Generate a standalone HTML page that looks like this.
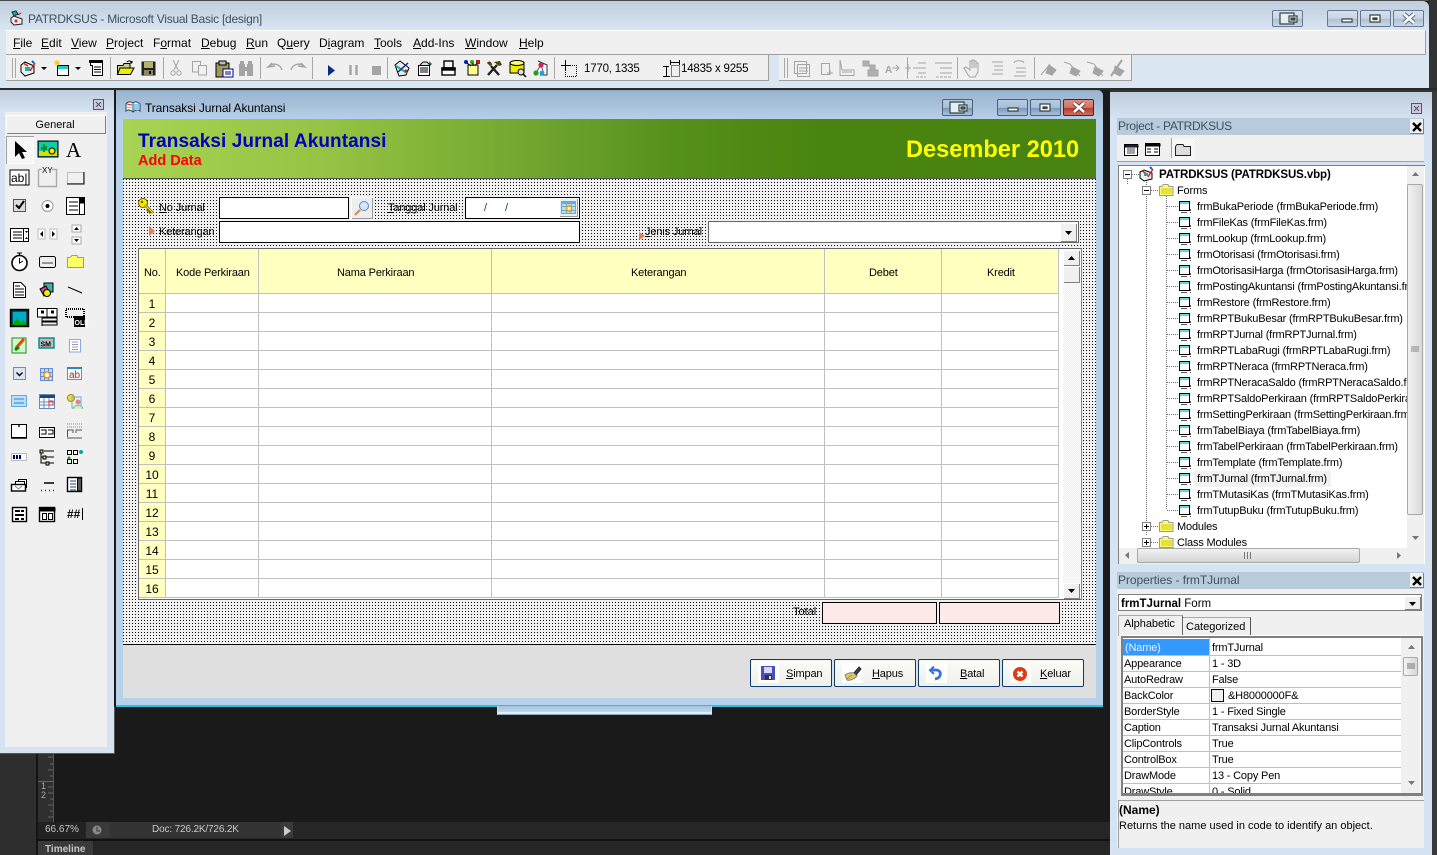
<!DOCTYPE html>
<html><head><meta charset="utf-8"><title>PATRDKSUS - Microsoft Visual Basic [design]</title>
<style>
html,body{margin:0;padding:0;width:1437px;height:855px;overflow:hidden;background:#1a1a1a}
body{position:relative;font-family:"Liberation Sans",sans-serif;font-size:12px;color:#000}
div{position:absolute;box-sizing:border-box}
.t{position:absolute;white-space:nowrap;line-height:14px}
.f{font-size:11px;letter-spacing:-.15px;margin-top:1px}
.wb{position:absolute;height:17px;width:31px;border:1px solid #66788f;border-radius:2px;background:linear-gradient(#d5e1ee 0,#c6d5e5 50%,#aebfd2 55%,#cbd9e8 100%)}
.fb{background:linear-gradient(#b6cbe2 0,#a9c0da 50%,#7f9aba 55%,#a6c0dc 100%);border-color:#4f6078}
.bl{background:#fff;border:1px solid #000}
.ln{background:#c0c0c0}
.yh{background:#ffffc0}
.b{position:absolute;top:659px;height:28px;width:82px;border:1px solid #0c3c74;border-radius:2px;background:linear-gradient(#fbfbf9,#efefea);box-shadow:inset 0 0 0 1px #f4f4f0}
.bi{position:absolute;left:7px;top:3px;width:21px;height:20px;background:#fff}
.tr{font-size:11px;letter-spacing:-.17px;margin-top:1px}
.dots{background-color:#f0f0f0;background-image:linear-gradient(90deg,transparent 1px,#f0f0f0 1px),linear-gradient(#000 1px,#f0f0f0 1px);background-size:3px 3px,3px 3px}
.dith{background-color:#fff;background-image:linear-gradient(45deg,#efefef 25%,transparent 25%,transparent 75%,#efefef 75%),linear-gradient(45deg,#efefef 25%,transparent 25%,transparent 75%,#efefef 75%);background-size:2px 2px;background-position:0 0,1px 1px}
.sb{background:#f0f0f0;box-shadow:inset 1px 1px 0 #fff,inset -1px -1px 0 #808080}
.n{left:139px;width:26px;text-align:center}
</style></head><body>

<!-- dark background -->
<div style="left:0;top:754px;width:36px;height:101px;background:#2e2e2e"></div>
<div style="left:36px;top:754px;width:2px;height:101px;background:#141414"></div>
<div style="left:38px;top:754px;width:16px;height:68px;background:#2f2f2f"></div>
<div style="left:53px;top:754px;width:1px;height:68px;background:#555"></div>
<div style="left:38px;top:781px;width:16px;height:1px;background:#666"></div>
<div class="t" style="left:41px;top:782px;font-size:9px;line-height:9px;color:#aaa">1<br>2</div>
<div style="left:38px;top:822px;width:1399px;height:17px;background:#262626"></div>
<div style="left:38px;top:822px;width:48px;height:17px;background:#222"></div>
<div class="t" style="left:45px;top:823px;font-size:10px;color:#c8c8c8">66.67%</div>
<div style="left:86px;top:822px;width:24px;height:16px;background:#3a3a3a"></div>
<div style="left:110px;top:822px;width:171px;height:16px;background:#333"></div>
<div class="t" style="left:152px;top:823px;font-size:10px;letter-spacing:-.15px;color:#c8c8c8">Doc: 726.2K/726.2K</div>
<div style="left:281px;top:822px;width:12px;height:16px;background:#3a3a3a"></div>
<div style="left:38px;top:839px;width:1399px;height:2px;background:#111"></div>
<div style="left:38px;top:841px;width:1399px;height:14px;background:#262626"></div>
<div style="left:38px;top:841px;width:55px;height:14px;background:#3a3a3a"></div>
<div class="t" style="left:45px;top:843px;font-size:10px;font-weight:bold;color:#c8c8c8">Timeline</div>
<div style="left:1429px;top:0;width:8px;height:92px;background:#333"></div>

<!-- main window -->
<div style="left:0;top:1px;width:1429px;height:87px;background:linear-gradient(#bfcedd,#dae6f2 30px,#dae6f2);border-top-right-radius:6px"></div>
<div style="left:0;top:0;width:1429px;height:1px;background:#4a4a4a"></div>
<div style="left:0;top:88px;width:1437px;height:2px;background:#2a2a2a"></div>
<div class="t" style="left:28px;top:12px;color:#3f4f63;letter-spacing:-.25px">PATRDKSUS - Microsoft Visual Basic [design]</div>
<div class="wb" style="left:1272px;top:10px"></div>
<div class="wb" style="left:1327px;top:10px"></div>
<div class="wb" style="left:1360px;top:10px"></div>
<div class="wb" style="left:1393px;top:10px"></div>
<div style="left:6px;top:30px;width:1420px;height:25px;background:#f0f0f0;border-top:1px solid #fff;border-right:1px solid #a0a0a0;border-bottom:1px solid #a0a0a0"></div>
<div style="left:6px;top:55px;width:763px;height:26px;background:#f0f0f0;border-right:1px solid #a0a0a0;border-bottom:1px solid #a0a0a0"></div>
<div style="left:779px;top:55px;width:353px;height:26px;background:#f0f0f0;border-right:1px solid #a0a0a0;border-bottom:1px solid #a0a0a0"></div>

<div class="t" style="left:13px;top:36px"><u>F</u>ile</div>
<div class="t" style="left:41px;top:36px"><u>E</u>dit</div>
<div class="t" style="left:71px;top:36px"><u>V</u>iew</div>
<div class="t" style="left:106px;top:36px"><u>P</u>roject</div>
<div class="t" style="left:153px;top:36px">F<u>o</u>rmat</div>
<div class="t" style="left:201px;top:36px"><u>D</u>ebug</div>
<div class="t" style="left:246px;top:36px"><u>R</u>un</div>
<div class="t" style="left:277px;top:36px">Q<u>u</u>ery</div>
<div class="t" style="left:319px;top:36px">D<u>i</u>agram</div>
<div class="t" style="left:374px;top:36px"><u>T</u>ools</div>
<div class="t" style="left:413px;top:36px"><u>A</u>dd-Ins</div>
<div class="t" style="left:465px;top:36px"><u>W</u>indow</div>
<div class="t" style="left:519px;top:36px"><u>H</u>elp</div>
<div class="t" style="left:584px;top:62px;font-size:11.5px;letter-spacing:-.2px">1770, 1335</div>
<div class="t" style="left:681px;top:62px;font-size:11.5px;letter-spacing:-.2px">14835 x 9255</div>

<!-- toolbox -->
<div style="left:0;top:90px;width:115px;height:664px;background:linear-gradient(#bfcedd,#d6e3f2 22px);border-right:1px solid #555;border-bottom:1px solid #555"></div>
<div style="left:5px;top:112px;width:102px;height:635px;background:#f0f0f0"></div>
<div style="left:6px;top:115px;width:100px;height:19px;background:#f0f0f0;box-shadow:inset 1px 1px 0 #fff,inset -1px -1px 0 #808080"></div>
<div class="t" style="left:6px;width:98px;text-align:center;top:118px;font-size:11px">General</div>
<div class="dith" style="left:6px;top:136px;width:28px;height:28px;box-shadow:inset 1px 1px 0 #a0a0a0,inset -1px -1px 0 #fff"></div>

<!-- form window -->
<div style="left:116px;top:90px;width:987px;height:616px;background:linear-gradient(#9ab3cf,#b8d1ea 30px);border-top-right-radius:5px;border-top:1px solid #8da4bf"></div>
<div style="left:116px;top:705px;width:987px;height:2px;background:#2cc0dc"></div>
<div style="left:114px;top:90px;width:2px;height:617px;background:#1a1a1a"></div>
<div class="t" style="left:145px;top:101px;letter-spacing:-.1px">Transaksi Jurnal Akuntansi</div>
<div class="wb fb" style="left:942px;top:99px"></div>
<div class="wb fb" style="left:997px;top:99px"></div>
<div class="wb fb" style="left:1030px;top:99px"></div>
<div class="wb" style="left:1063px;top:99px;border-color:#5a1a20;background:linear-gradient(#dc8f82 0,#d07567 50%,#b33c2e 55%,#cf6f5f 100%)"></div>

<div style="left:123px;top:119px;width:973px;height:60px;background:linear-gradient(90deg,#a8d352 0,#97c445 20%,#74a931 40%,#55901a 57%,#4a8410 72%,#488210 100%);border-bottom:1px solid #555"></div>
<div class="t" style="left:138px;top:130px;font-size:19px;letter-spacing:.08px;line-height:23px;font-weight:bold;color:#0000c0">Transaksi Jurnal Akuntansi</div>
<div class="t" style="left:138px;top:153px;font-size:14.5px;line-height:16px;font-weight:bold;color:#ff0000">Add Data</div>
<div class="t" style="left:906px;top:136px;font-size:23.6px;line-height:28px;font-weight:bold;color:#ffff00">Desember 2010</div>

<div class="dots" style="left:123px;top:179px;width:973px;height:465px"></div>
<div style="left:123px;top:644px;width:973px;height:1px;background:#000"></div>
<div style="left:123px;top:645px;width:973px;height:53px;background:#dfdfdf"></div>

<div class="t f" style="left:159px;top:200px"><u>N</u>o Jurnal</div>
<div class="bl" style="left:219px;top:197px;width:130px;height:22px"></div>
<div style="left:351px;top:197px;width:22px;height:22px;background:#eee;box-shadow:inset 1px 1px 0 #fff,inset -1px -1px 0 #999"></div>
<div class="t f" style="left:388px;top:200px"><u>T</u>anggal Jurnal</div>
<div class="bl" style="left:465px;top:197px;width:115px;height:22px"></div>
<div class="t" style="left:484px;top:201px;color:#004080;font-size:11px">/</div>
<div class="t" style="left:505px;top:201px;color:#004080;font-size:11px">/</div>
<div style="left:560px;top:199px;width:18px;height:18px;background:#e6eef6;box-shadow:inset -1px -1px 0 #999"></div>
<div class="t f" style="left:159px;top:224px">Keterangan</div>
<div class="bl" style="left:219px;top:221px;width:361px;height:22px"></div>
<div class="t f" style="left:645px;top:224px"><u>J</u>enis Jurnal</div>
<div style="left:708px;top:221px;width:371px;height:22px;background:#fff;border:1px solid #666"></div>
<div class="sb" style="left:1060px;top:223px;width:17px;height:19px"></div>

<!-- grid -->
<div style="left:138px;top:248px;width:944px;height:352px;background:#fff;border:1px solid #666;border-right-color:#888"></div>
<div class="yh" style="left:139px;top:249px;width:919px;height:44px"></div>
<div class="yh" style="left:139px;top:293px;width:26px;height:305px"></div>
<div class="ln" style="left:165px;top:249px;width:1px;height:349px"></div>
<div class="ln" style="left:258px;top:249px;width:1px;height:349px"></div>
<div class="ln" style="left:491px;top:249px;width:1px;height:349px"></div>
<div class="ln" style="left:824px;top:249px;width:1px;height:349px"></div>
<div class="ln" style="left:941px;top:249px;width:1px;height:349px"></div>
<div class="ln" style="left:1058px;top:249px;width:1px;height:349px"></div>
<div class="ln" style="left:139px;top:293px;width:919px;height:1px"></div>
<div class="ln" style="left:139px;top:312px;width:919px;height:1px"></div>
<div class="ln" style="left:139px;top:331px;width:919px;height:1px"></div>
<div class="ln" style="left:139px;top:350px;width:919px;height:1px"></div>
<div class="ln" style="left:139px;top:369px;width:919px;height:1px"></div>
<div class="ln" style="left:139px;top:388px;width:919px;height:1px"></div>
<div class="ln" style="left:139px;top:407px;width:919px;height:1px"></div>
<div class="ln" style="left:139px;top:426px;width:919px;height:1px"></div>
<div class="ln" style="left:139px;top:445px;width:919px;height:1px"></div>
<div class="ln" style="left:139px;top:464px;width:919px;height:1px"></div>
<div class="ln" style="left:139px;top:483px;width:919px;height:1px"></div>
<div class="ln" style="left:139px;top:502px;width:919px;height:1px"></div>
<div class="ln" style="left:139px;top:521px;width:919px;height:1px"></div>
<div class="ln" style="left:139px;top:540px;width:919px;height:1px"></div>
<div class="ln" style="left:139px;top:559px;width:919px;height:1px"></div>
<div class="ln" style="left:139px;top:578px;width:919px;height:1px"></div>
<div class="ln" style="left:139px;top:597px;width:919px;height:1px"></div>
<div class="t f" style="left:144px;top:265px">No.</div>
<div class="t f" style="left:176px;top:265px">Kode Perkiraan</div>
<div class="t f" style="left:337px;top:265px">Nama Perkiraan</div>
<div class="t f" style="left:631px;top:265px">Keterangan</div>
<div class="t f" style="left:869px;top:265px">Debet</div>
<div class="t f" style="left:987px;top:265px">Kredit</div>
<div class="t n" style="top:297px">1</div><div class="t n" style="top:316px">2</div><div class="t n" style="top:335px">3</div><div class="t n" style="top:354px">4</div>
<div class="t n" style="top:373px">5</div><div class="t n" style="top:392px">6</div><div class="t n" style="top:411px">7</div><div class="t n" style="top:430px">8</div>
<div class="t n" style="top:449px">9</div><div class="t n" style="top:468px">10</div><div class="t n" style="top:487px">11</div><div class="t n" style="top:506px">12</div>
<div class="t n" style="top:525px">13</div><div class="t n" style="top:544px">14</div><div class="t n" style="top:563px">15</div><div class="t n" style="top:582px">16</div>
<div style="left:1059px;top:249px;width:4px;height:350px;background:#fff"></div>
<div class="dith" style="left:1063px;top:249px;width:18px;height:350px"></div>
<div class="sb" style="left:1063px;top:250px;width:17px;height:16px"></div>
<div class="sb" style="left:1063px;top:266px;width:17px;height:17px"></div>
<div class="sb" style="left:1063px;top:583px;width:17px;height:16px"></div>

<div class="t f" style="left:793px;top:604px;letter-spacing:0">Total</div>
<div style="left:822px;top:602px;width:115px;height:22px;background:#fdeae8;border:1px solid #000"></div>
<div style="left:939px;top:602px;width:121px;height:22px;background:#fdeae8;border:1px solid #000"></div>

<div class="b" style="left:750px"><div class="bi"></div><div class="t f" style="left:35px;top:6px"><u>S</u>impan</div></div>
<div class="b" style="left:834px"><div class="bi"></div><div class="t f" style="left:37px;top:6px"><u>H</u>apus</div></div>
<div class="b" style="left:918px"><div class="bi"></div><div class="t f" style="left:41px;top:6px"><u>B</u>atal</div></div>
<div class="b" style="left:1002px"><div class="bi"></div><div class="t f" style="left:37px;top:6px"><u>K</u>eluar</div></div>

<div style="left:497px;top:706px;width:215px;height:9px;background:linear-gradient(#9fc3e2,#c8dff2);border-left:1px solid #dde;border-right:1px solid #dde;border-bottom:1px solid #8ab;box-shadow:inset 0 -2px 0 #e4eef8"></div>

<!-- right panel -->
<div style="left:1110px;top:92px;width:322px;height:763px;background:linear-gradient(#bfcedd,#d6e3f2 28px);"></div>
<div style="left:1110px;top:90px;width:327px;height:2px;background:#333"></div>
<div style="left:1432px;top:92px;width:5px;height:763px;background:#3a3a3a"></div>
<div style="left:1117px;top:118px;width:307px;height:17px;background:#b9cadb"></div>
<div class="t" style="left:1118px;top:119px;color:#3f5064;letter-spacing:-.3px">Project - PATRDKSUS</div>
<div style="left:1410px;top:119px;width:14px;height:15px;background:#f0f0f0;box-shadow:inset -1px -1px 0 #808080"></div>
<div style="left:1117px;top:135px;width:307px;height:27px;background:#f0f0f0;border-bottom:1px solid #a0a0a0"></div>
<div style="left:1171px;top:138px;width:1px;height:20px;background:#a0a0a0"></div>
<div class="dith" style="left:1172px;top:138px;width:23px;height:22px"></div>

<div style="left:1118px;top:165px;width:307px;height:399px;background:#fff;border-top:1px solid #808080;border-left:1px solid #808080;overflow:hidden"></div>
<div style="left:1119px;top:166px;width:288px;height:382px;overflow:hidden">
<div class="t" style="left:40px;top:2px;font-weight:bold;font-size:11.5px;letter-spacing:-.1px">PATRDKSUS (PATRDKSUS.vbp)</div>
<div class="t tr" style="left:58px;top:17px">Forms</div>
<div class="t tr" style="left:78px;top:33px">frmBukaPeriode (frmBukaPeriode.frm)</div>
<div class="t tr" style="left:78px;top:49px">frmFileKas (frmFileKas.frm)</div>
<div class="t tr" style="left:78px;top:65px">frmLookup (frmLookup.frm)</div>
<div class="t tr" style="left:78px;top:81px">frmOtorisasi (frmOtorisasi.frm)</div>
<div class="t tr" style="left:78px;top:97px">frmOtorisasiHarga (frmOtorisasiHarga.frm)</div>
<div class="t tr" style="left:78px;top:113px">frmPostingAkuntansi (frmPostingAkuntansi.frm)</div>
<div class="t tr" style="left:78px;top:129px">frmRestore (frmRestore.frm)</div>
<div class="t tr" style="left:78px;top:145px">frmRPTBukuBesar (frmRPTBukuBesar.frm)</div>
<div class="t tr" style="left:78px;top:161px">frmRPTJurnal (frmRPTJurnal.frm)</div>
<div class="t tr" style="left:78px;top:177px">frmRPTLabaRugi (frmRPTLabaRugi.frm)</div>
<div class="t tr" style="left:78px;top:193px">frmRPTNeraca (frmRPTNeraca.frm)</div>
<div class="t tr" style="left:78px;top:209px">frmRPTNeracaSaldo (frmRPTNeracaSaldo.frm)</div>
<div class="t tr" style="left:78px;top:225px">frmRPTSaldoPerkiraan (frmRPTSaldoPerkiraan.frm)</div>
<div class="t tr" style="left:78px;top:241px">frmSettingPerkiraan (frmSettingPerkiraan.frm)</div>
<div class="t tr" style="left:78px;top:257px">frmTabelBiaya (frmTabelBiaya.frm)</div>
<div class="t tr" style="left:78px;top:273px">frmTabelPerkiraan (frmTabelPerkiraan.frm)</div>
<div class="t tr" style="left:78px;top:289px">frmTemplate (frmTemplate.frm)</div>
<div style="left:75px;top:305px;width:137px;height:16px;background:#f2f2f2"></div>
<div class="t tr" style="left:78px;top:305px">frmTJurnal (frmTJurnal.frm)</div>
<div class="t tr" style="left:78px;top:321px">frmTMutasiKas (frmTMutasiKas.frm)</div>
<div class="t tr" style="left:78px;top:337px">frmTutupBuku (frmTutupBuku.frm)</div>
<div class="t tr" style="left:58px;top:353px">Modules</div>
<div class="t tr" style="left:58px;top:369px">Class Modules</div>
</div>
<div style="left:1407px;top:166px;width:17px;height:382px;background:#f0f0f0"></div>
<div style="left:1407px;top:184px;width:16px;height:331px;background:linear-gradient(90deg,#f2f2f2,#d8d8d8);border:1px solid #a8a8a8;border-radius:2px"></div>
<div style="left:1119px;top:548px;width:305px;height:16px;background:#f0f0f0"></div>
<div style="left:1137px;top:548px;width:223px;height:15px;background:linear-gradient(#f2f2f2,#d4d4d4);border:1px solid #a8a8a8;border-radius:2px"></div>

<div style="left:1117px;top:572px;width:307px;height:17px;background:#b9cadb"></div>
<div class="t" style="left:1118px;top:573px;color:#3f5064;letter-spacing:-.05px">Properties - frmTJurnal</div>
<div style="left:1410px;top:573px;width:14px;height:15px;background:#f0f0f0;box-shadow:inset -1px -1px 0 #808080"></div>
<div style="left:1117px;top:589px;width:307px;height:258px;background:#f0f0f0"></div>
<div style="left:1118px;top:594px;width:304px;height:17px;background:#fff;border:1px solid #808080"></div>
<div class="t" style="left:1121px;top:597px;font-size:11.5px"><b>frmTJurnal</b> Form</div>
<div class="sb" style="left:1404px;top:596px;width:17px;height:14px"></div>
<div style="left:1118px;top:615px;width:65px;height:21px;background:#f0f0f0;border:1px solid #aaa;border-bottom:none;border-right:1px solid #666"></div>
<div class="t" style="left:1124px;top:617px;font-size:11px;letter-spacing:-.05px">Alphabetic</div>
<div style="left:1183px;top:617px;width:68px;height:19px;background:#f0f0f0;border-top:1px solid #aaa;border-right:1px solid #555"></div>
<div class="t" style="left:1186px;top:620px;font-size:11px">Categorized</div>
<div style="left:1121px;top:635px;width:302px;height:1px;background:#fff"></div>
<div style="left:1121px;top:636px;width:302px;height:160px;background:#fff;border:2px solid #808080;border-bottom:3px solid #808080"></div>
<div style="left:1123px;top:638px;width:297px;height:155px;overflow:hidden">
<div style="left:0;top:1px;width:86px;height:16px;background:#3399ff"></div>
<div class="ln" style="left:86px;top:0;width:1px;height:155px"></div>
<div class="ln" style="left:0;top:17px;width:278px;height:1px"></div>
<div class="ln" style="left:0;top:33px;width:278px;height:1px"></div>
<div class="ln" style="left:0;top:49px;width:278px;height:1px"></div>
<div class="ln" style="left:0;top:65px;width:278px;height:1px"></div>
<div class="ln" style="left:0;top:81px;width:278px;height:1px"></div>
<div class="ln" style="left:0;top:97px;width:278px;height:1px"></div>
<div class="ln" style="left:0;top:113px;width:278px;height:1px"></div>
<div class="ln" style="left:0;top:129px;width:278px;height:1px"></div>
<div class="ln" style="left:0;top:145px;width:278px;height:1px"></div>
<div style="left:278px;top:0;width:19px;height:155px;background:#f0f0f0"></div>
<div style="left:280px;top:19px;width:15px;height:19px;background:linear-gradient(90deg,#f4f4f4,#d8d8d8);border:1px solid #a8a8a8;border-radius:2px"></div>
<div class="t tr" style="left:2px;top:2px;color:#e8f2ff">(Name)</div><div class="t tr" style="left:89px;top:2px">frmTJurnal</div>
<div class="t tr" style="left:1px;top:18px">Appearance</div><div class="t tr" style="left:89px;top:18px">1 - 3D</div>
<div class="t tr" style="left:1px;top:34px">AutoRedraw</div><div class="t tr" style="left:89px;top:34px">False</div>
<div class="t tr" style="left:1px;top:50px">BackColor</div><div style="left:88px;top:51px;width:13px;height:13px;background:#f0f0f0;border:1px solid #000"></div><div class="t tr" style="left:105px;top:50px">&amp;H8000000F&amp;</div>
<div class="t tr" style="left:1px;top:66px">BorderStyle</div><div class="t tr" style="left:89px;top:66px">1 - Fixed Single</div>
<div class="t tr" style="left:1px;top:82px">Caption</div><div class="t tr" style="left:89px;top:82px">Transaksi Jurnal Akuntansi</div>
<div class="t tr" style="left:1px;top:98px">ClipControls</div><div class="t tr" style="left:89px;top:98px">True</div>
<div class="t tr" style="left:1px;top:114px">ControlBox</div><div class="t tr" style="left:89px;top:114px">True</div>
<div class="t tr" style="left:1px;top:130px">DrawMode</div><div class="t tr" style="left:89px;top:130px">13 - Copy Pen</div>
<div class="t tr" style="left:1px;top:146px">DrawStyle</div><div class="t tr" style="left:89px;top:146px">0 - Solid</div>
</div>
<div style="left:1118px;top:800px;width:306px;height:48px;background:#f0f0f0;border-top:1px solid #a0a0a0;border-left:1px solid #a0a0a0"></div>
<div class="t" style="left:1119px;top:803px;font-weight:bold">(Name)</div>
<div class="t tr" style="left:1119px;top:818px;letter-spacing:0">Returns the name used in code to identify an object.</div>

<!-- icon overlay -->
<svg width="1437" height="855" viewBox="0 0 1437 855" style="position:absolute;left:0;top:0;pointer-events:none" font-family="Liberation Sans, sans-serif">
<defs>
<symbol id="frm" width="14" height="14" viewBox="0 0 14 14" overflow="visible"><path d="M1.5 1.5H11.5V10.5H1.5Z" fill="#fff" stroke="#000"/><rect x="2" y="2" width="9" height="2" fill="#5dd"/><path d="M3 12.500H9M12 12.500H13M12.500 9V11" stroke="#555" fill="none"/></symbol>
<symbol id="fld" width="15" height="14" viewBox="0 0 15 14" overflow="visible"><path d="M.5 3.500H3L4.500 1.500H9L10 3.500H14V12.500H.5Z" fill="#ff6" stroke="#999"/><path d="M2 5H13V11H2Z" fill="#e8e040"/></symbol>
<symbol id="arrU" width="7" height="4" viewBox="0 0 7 4" overflow="visible"><path d="M3.500 0L7 4H0Z"/></symbol>
<symbol id="arrD" width="7" height="4" viewBox="0 0 7 4" overflow="visible"><path d="M0 0H7L3.500 4Z"/></symbol>
<symbol id="sep" width="1" height="22" viewBox="0 0 1 22"><rect width="1" height="22" fill="#a8a8a8"/></symbol>
<symbol id="pm" width="9" height="9" viewBox="0 0 9 9" overflow="visible"><rect x=".5" y=".5" width="8" height="8" fill="#fff" stroke="#808080"/><path d="M2 4.500H7" stroke="#000"/></symbol>
<symbol id="pp" width="9" height="9" viewBox="0 0 9 9" overflow="visible"><rect x=".5" y=".5" width="8" height="8" fill="#fff" stroke="#808080"/><path d="M2 4.500H7M4.500 2V7" stroke="#000"/></symbol>
</defs>

<!-- title icon main -->
<g transform="translate(9,10)"><path d="M2 8L5 6L13 9V14L5 15L2 12Z" fill="#eee" stroke="#222"/><path d="M3 2L7 1L9 4L5 6Z" fill="#2aa" stroke="#033"/><circle cx="7" cy="11" r="1.500" fill="#d22"/><path d="M9 5L12 3" stroke="#c00"/></g>

<!-- window button glyphs -->
<g fill="none" stroke="#344" stroke-width="1.2">
<path d="M1280 13H1294V24H1280Z" fill="#e8eef4"/><path d="M1289 16H1297V22H1289Z" fill="#fff"/><path d="M1291 18H1295V20H1291Z" fill="#456"/>
<path d="M1342 19H1352V22H1342Z" fill="#fff"/>
<path d="M1370 15H1380V22H1370Z" fill="#fff"/><path d="M1373 18H1377V19.500H1373Z" fill="#345"/>
<path d="M1404 14L1414 23M1414 14L1404 23" stroke="#4a5a70" stroke-width="4.400"/><path d="M1404 14L1414 23M1414 14L1404 23" stroke="#fff" stroke-width="2.600"/>
<path d="M950 102H964V113H950Z" fill="#e8eef4"/><path d="M959 105H967V111H959Z" fill="#fff"/><path d="M961 107H965V109H961Z" fill="#456"/>
<path d="M1008 108H1018V111H1008Z" fill="#fff"/>
<path d="M1040 104H1050V111H1040Z" fill="#fff"/><path d="M1043 107H1047V108.500H1043Z" fill="#345"/>
<path d="M1074 103L1084 112M1084 103L1074 112" stroke="#6a2018" stroke-width="4.200"/><path d="M1074 103L1084 112M1084 103L1074 112" stroke="#fff" stroke-width="2.600"/>
</g>

<!-- main toolbar grips & separators -->
<g stroke="#a8a8a8" fill="none">
<path d="M12.500 58V78M15.500 58V78"/><path d="M784.500 58V78M787.500 58V78"/>
</g>
<use href="#sep" x="110" y="57"/><use href="#sep" x="163" y="57"/><use href="#sep" x="260" y="57"/><use href="#sep" x="312" y="57"/><use href="#sep" x="387" y="57"/><use href="#sep" x="554" y="57"/><use href="#sep" x="907" y="57"/><use href="#sep" x="957" y="57"/><use href="#sep" x="1034" y="57"/>

<!-- toolbar 1 icons -->
<g transform="translate(20,59)"><path d="M1 6L5 3L14 7V14L5 17L1 13Z" fill="#eee" stroke="#000"/><path d="M3 4L8 7M10 12L15 4" stroke="#c22" stroke-width="1.500"/><rect x="5" y="8" width="5" height="4" fill="#2aa"/><path d="M12 2L14 4" stroke="#06c" stroke-width="2"/></g>
<path d="M41 67H47L44 70Z"/>
<g transform="translate(54,60)"><path d="M3.500 5.500H14.500V15.500H3.500Z" fill="#fff" stroke="#000"/><rect x="4" y="6" width="10" height="3" fill="#2cc"/><path d="M3 0V6M0 3H6M1 1L5 5M5 1L1 5" stroke="#fc0"/></g>
<path d="M75 67H81L78 70Z"/>
<g transform="translate(89,60)"><path d="M1.500 .5H13.500V15.500H3.500V5.500H1.500Z" fill="#fff" stroke="#000"/><rect x="0" y="0" width="14" height="3" fill="#000"/><path d="M5 7H12M5 9.500H12M5 12H12" stroke="#000"/></g>
<g transform="translate(117,60)"><path d="M.5 5.500H6L7 3.500H13V14.500H.5Z" fill="#cc9" stroke="#000"/><path d="M3 8H17L13.500 14.500H.5Z" fill="#ee0" stroke="#000"/><path d="M10 2C12 0 14 1 15 3M15 3L13 3M15 3V1" stroke="#000" fill="none"/></g>
<g transform="translate(141,61)"><rect x=".5" y=".5" width="14" height="14" fill="#222"/><rect x="3" y="1" width="9" height="6" fill="#b8b070"/><rect x="3" y="9" width="9" height="5" fill="#886"/><rect x="8" y="10" width="2" height="3" fill="#000"/></g>
<g fill="none" stroke="#a4a4a4">
<path d="M173 60L178 70M179 60L174 70"/><circle cx="173" cy="73" r="2.200"/><circle cx="179" cy="73" r="2.200"/>
<path d="M192.500 61.500H200.500V72H192.500Z"/><path d="M198.500 65.500H206.500V75H198.500Z" fill="#f0f0f0"/>
<path d="M275 66L268 67L272 63M268 67C273 62 280 64 282 70" stroke-width="1.400"/>
<path d="M298 66L305 67L301 63M305 67C300 62 293 64 291 70" stroke-width="1.400"/>
</g>
<g transform="translate(215,60)"><rect x="1" y="3" width="13" height="14" fill="#a09a58" stroke="#000"/><rect x="4" y="1" width="7" height="4" fill="#bbb" stroke="#000"/><rect x="8" y="9" width="10" height="8" fill="#fff" stroke="#008"/><path d="M10 12H16M10 14H16" stroke="#008"/></g>
<g transform="translate(238,60)" fill="#a4a4a4"><rect x="1" y="4" width="6" height="12"/><rect x="9" y="4" width="6" height="12"/><rect x="2" y="1" width="4" height="4"/><rect x="10" y="1" width="4" height="4"/><rect x="6" y="7" width="4" height="4"/></g>
<path d="M328 65L335 70.500L328 76Z" fill="#0a2a8a"/>
<path d="M350.500 65V75M356.500 65V75" stroke="#a4a4a4" stroke-width="2.400"/>
<rect x="372" y="66" width="9" height="9" fill="#a4a4a4"/>
<g transform="translate(394,60)"><path d="M1 5L6 1L15 8L12 15L5 16Z" fill="#eee" stroke="#000"/><path d="M2 6L13 13" stroke="#2aa" stroke-width="2"/><path d="M4 12L14 3" stroke="#02a" stroke-width="1.500"/><circle cx="12" cy="11" r="1.500" fill="#c22"/></g>
<g transform="translate(417,60)"><path d="M1.500 5.500H12.500V15.500H1.500Z" fill="#fff" stroke="#000"/><path d="M3 5L6 2H10L13 5" fill="#ddd" stroke="#000"/><path d="M3 8H11M3 10H11M3 12H11" stroke="#000"/><path d="M12 1L15 4L13 6" fill="#068"/></g>
<g transform="translate(441,60)" fill="none" stroke="#000" stroke-width="1.400"><rect x="3" y="1" width="9" height="7"/><rect x="1" y="8" width="13" height="7" fill="#fff"/><rect x="1" y="8" width="13" height="2" fill="#000"/></g>
<g transform="translate(463,59)"><rect x="5" y="6" width="10" height="10" fill="#ff8" stroke="#000"/><circle cx="3" cy="3" r="2" fill="#02a"/><circle cx="9" cy="3" r="2" fill="#2a2"/><rect x="13" y="1" width="4" height="4" fill="#a22"/><path d="M4 4L8 7M10 4L10 7M14 4L12 7" stroke="#000"/></g>
<g transform="translate(486,60)"><path d="M2 15L11 5M13 15L5 6" stroke="#222" stroke-width="2.400"/><path d="M8 2L14 1L16 5L13 6Z" fill="#540"/><path d="M1 3C3 0 6 2 6 5L4 6Z" fill="#540"/></g>
<g transform="translate(509,60)"><path d="M1 3C1 0 15 0 15 3V13H1Z" fill="#ee0" stroke="#000"/><ellipse cx="8" cy="3" rx="7" ry="2.500" fill="#ff6" stroke="#000"/><circle cx="12" cy="12" r="3" fill="#ddd" stroke="#000"/><path d="M14 14L17 17" stroke="#000" stroke-width="1.500"/></g>
<g transform="translate(532,60)"><path d="M6 1L15 5V15H8" fill="#fff" stroke="#234"/><path d="M9 5L5 11M9 5L11 11" stroke="#555"/><circle cx="9" cy="5" r="2.600" fill="#d02060"/><circle cx="4" cy="13" r="2.600" fill="#20a020"/><circle cx="10" cy="13" r="2.400" fill="#20a0e0"/></g>
<!-- position/size icons -->
<g stroke="#000" fill="none"><path d="M565.500 60V70M561 65.500H570"/><path d="M565.500 70V76.500H576.500V65.500H570" stroke-dasharray="1 1"/></g>
<g stroke="#000" fill="none"><path d="M671.500 65.500H679.500V76.500H671.500V65.500" stroke-dasharray="1 1"/><path d="M671 62.500H680M670.500 60V65M679.500 60V65M666.500 67V76M663 66.500H669M663 76.500H670"/></g>

<!-- toolbar 2 gray -->
<g fill="none" stroke="#a4a4a4">
<path d="M794.500 61.500H806.500V73.500H794.500ZM797.500 64.500H809.500V76.500H797.500Z"/><path d="M799 68H808M799 71H808"/>
<path d="M821.500 63.500H829.500V74.500H821.500Z"/><path d="M830 70V75M827 73H833"/>
<path d="M840 60L842 70H854V75.500H840ZM842 72H852"/>
<path d="M863 61H869V65H875V70H870V66H863ZM868 70H878V76H868Z" fill="#b0b0b0"/>
<path d="M913 68H926M918 73H926M918 63H926M908 64V72M905 68H911"/><path d="M935 63H952M940 68H952M940 73H952"/><path d="M916 77H926M936 77H952" stroke-dasharray="3 1"/>
<path d="M968 75L964 68L966 67L970 70V61H972V68V60H974V68V61H976V68V63H978V72L975 77H970Z" fill="#eee"/>
<path d="M992 62H1003M994 66H1003M994 70H1003M992 74H1003"/>
<path d="M1014 63C1015 60 1023 60 1024 63M1016 68H1026M1016 72H1026M1014 76H1026"/>
</g>
<text x="885" y="73" font-size="10" font-weight="bold" fill="#a4a4a4">A</text><path d="M892 68H899M896 65L899 68L896 71" stroke="#a4a4a4" fill="none"/>
<g fill="#a4a4a4" stroke="#a4a4a4">
<path d="M1041 75L1050 64" fill="none"/><path d="M1049 65L1056 70L1052 75L1046 73Z"/>
<path d="M1064 62L1070 64M1070 64L1080 76" fill="none"/><path d="M1072 67L1080 71L1076 76L1070 73Z"/>
<path d="M1087 62L1094 64M1094 64L1103 76" fill="none"/><path d="M1095 67L1103 71L1099 76L1093 73Z"/>
<path d="M1111 76L1122 60" fill="none" stroke-width="2"/><path d="M1115 66L1124 71L1120 76L1114 73Z"/>
</g>

<!-- small close buttons -->
<g fill="none" stroke="#556"><rect x="93.500" y="99.500" width="10" height="10" fill="#ccd"/><path d="M96 102L101 107M101 102L96 107"/><rect x="1411.500" y="103.500" width="10" height="10" fill="#ccd"/><path d="M1414 106L1419 111M1419 106L1414 111"/></g>
<path d="M1413 123L1421 131M1421 123L1413 131M1413 577L1421 585M1421 577L1413 585" stroke="#000" stroke-width="2.400"/>

<!-- toolbox icons -->
<path d="M15 141V157L19 153L22 159L25 158L22 152H27Z" fill="#000"/>
<g transform="translate(38,141)"><rect width="20" height="16" fill="#0a8a8a" stroke="#000"/><rect x="1" y="1" width="18" height="9" fill="#1ca"/><rect x="1" y="10" width="18" height="5" fill="#dd0"/><path d="M6 3V11M4 6V8H8V5" stroke="#092" fill="none" stroke-width="2"/><circle cx="14" cy="10" r="3" fill="#ee0" stroke="#000"/></g>
<text x="66" y="157" font-family="Liberation Serif, serif" font-size="21" fill="#000">A</text>
<rect x="10" y="170" width="19" height="15" fill="#fff" stroke="#000"/><text x="11" y="182" font-size="12" fill="#000">ab|</text>
<g fill="none" stroke="#aaa"><path d="M38.500 169.500H42M52 169.500H56.500V186.500H38.500V169.500" stroke-width="1.400"/></g><text x="42" y="173" font-size="8" fill="#000">XY</text>
<path d="M67.500 172.500H83.500V183.500H67.500Z" fill="#f0f0f0" stroke="#bbb"/><path d="M67 184H84V172" stroke="#000" fill="none"/>
<rect x="13.500" y="199.500" width="12" height="12" fill="#ddd" stroke="#555"/><path d="M16 205L19 208L24 201" stroke="#000" fill="none" stroke-width="2"/>
<circle cx="47.500" cy="206" r="5.500" fill="#fff" stroke="#999"/><circle cx="47.500" cy="206" r="2" fill="#000"/>
<g fill="none" stroke="#000"><rect x="66.500" y="197.500" width="18" height="17" fill="#fff"/><path d="M69 202H78M69 206H78M69 210H78M79.500 198V214"/><rect x="80" y="198" width="4" height="5" fill="#000"/></g>
<g fill="none" stroke="#000"><rect x="10.500" y="228.500" width="18" height="13" fill="#fff"/><path d="M13 232H22M13 235H22M13 238H22M23.500 229V241"/></g>
<path d="M25 231H28L26.500 233ZM25 239H28L26.500 237Z"/>
<g><rect x="38" y="229" width="7" height="10" fill="#fff" stroke="#bbb"/><rect x="50" y="229" width="7" height="10" fill="#fff" stroke="#bbb"/><path d="M43 231V237L40 234ZM52 231V237L55 234Z"/></g>
<g><rect x="72" y="225" width="9" height="7" fill="#fff" stroke="#aaa"/><rect x="72" y="237" width="9" height="7" fill="#fff" stroke="#aaa"/><path d="M76.500 227L79 230H74ZM76.500 242L79 239H74Z"/></g>
<g fill="#fff" stroke="#000"><circle cx="19.500" cy="263" r="7.500" stroke-width="1.600"/><path d="M19.500 258V263L23 261M17 253H22M19.500 253V255" fill="none"/></g>
<rect x="39.500" y="256.500" width="16" height="11" rx="2" fill="#eee" stroke="#000"/><path d="M42 263H53" stroke="#060"/>
<path d="M67.500 257.500H70L72 255.500H77L78 257.500H83.500V267.500H67.500Z" fill="#ff6" stroke="#999"/>
<g fill="none" stroke="#000"><path d="M13.500 282.500H21L25.500 287V297.500H13.500Z" fill="#fff"/><path d="M15 286H20M15 289H24M15 292H24M15 295H24"/></g>
<g stroke="#000"><rect x="44" y="283" width="9" height="9" fill="#4aa"/><path d="M40 289L46 286L49 292L44 296Z" fill="#d040a0"/><circle cx="47" cy="293" r="3.500" fill="#ee0"/></g>
<path d="M68 287L82 293" stroke="#000" fill="none"/>
<g stroke="#000"><rect x="10.500" y="309.500" width="18" height="17" fill="#088" stroke-width="1.400"/><rect x="12" y="311" width="15" height="14" fill="#0ac"/><path d="M12 325L17 318L21 323L23 320L27 325Z" fill="#0a0" stroke="none"/></g>
<g stroke="#000" fill="#fff"><path d="M37.500 308.500H57V317H37.500Z"/><path d="M47 308.500V317M42 317V326M42 318H57V321H42M42 325H57V322H42" fill="none"/></g>
<path d="M41 312H44M54 312H51" stroke="#000" stroke-width="3"/>
<rect x="74" y="316" width="11" height="11" fill="#000"/><rect x="66" y="309" width="18" height="8" fill="none" stroke="#000" stroke-dasharray="1 1" stroke-width="2"/>
<text x="74.500" y="325" font-size="7" font-weight="bold" fill="#fff">OLE</text>
<g transform="translate(12,338)"><rect width="14" height="15" fill="#cfc" stroke="#282"/><path d="M4 10L12 1" stroke="#e40" stroke-width="3"/><path d="M3 12L7 9" stroke="#080" stroke-width="3"/></g>
<rect x="39" y="338" width="15" height="10" fill="#bbb" stroke="#088" stroke-width="1.400"/><text x="40.500" y="346.500" font-size="7" font-weight="bold" fill="#000">SM</text>
<g transform="translate(69,339)"><rect x=".5" y=".5" width="11" height="12.500" fill="#fff" stroke="#8ad"/><path d="M3 3H9M3 5.500H9M3 8H9M3 10.500H9" stroke="#99b"/></g>
<rect x="13.500" y="367.500" width="12" height="12" fill="#dde4f4" stroke="#889"/><path d="M16.500 372.500L19.500 375.500L22.500 372.500" stroke="#000" fill="none" stroke-width="1.400"/>
<g transform="translate(40,368)"><rect x=".5" y=".5" width="12" height="12" fill="#bde" stroke="#68d"/><path d="M4.500 1V13M8.500 1V13M1 4.500H13M1 8.500H13" stroke="#68d"/><circle cx="7" cy="7" r="3" fill="#fff" stroke="#e90" stroke-width="1.600"/></g>
<g><rect x="67.500" y="367.500" width="14" height="12" fill="#fff" stroke="#888"/><rect x="67" y="367" width="15" height="2" fill="#28c"/><text x="69" y="378" font-size="10" fill="#a22">ab</text></g>
<g fill="#bdf" stroke="#6ad"><rect x="11.500" y="395.500" width="15" height="11"/><path d="M14 399H24M14 403H24" stroke="#28c"/></g>
<g><rect x="39.500" y="394.500" width="15" height="14" fill="#fff" stroke="#68b"/><rect x="40" y="395" width="15" height="3" fill="#247"/><path d="M44 398V409M49 398V409M40 402H55M40 405H55" stroke="#68b"/><rect x="49" y="401" width="4" height="4" fill="none" stroke="#d33"/></g>
<g><circle cx="71" cy="398" r="3.500" fill="#ed4" stroke="#a80"/><rect x="72" y="397" width="9" height="11" fill="none" stroke="#7ac"/><circle cx="78" cy="402" r="2.500" fill="#d88"/><path d="M73 409C74 404 82 404 83 409" fill="#cec" stroke="#8b8"/></g>
<path d="M11.500 437.500V424.500H26.500V437.500Z" fill="#fff" stroke="#000"/><path d="M11 438H27M19 424V427" stroke="#000" stroke-width="1.400"/>
<path d="M39.500 437.500V427.500H54.500V437.500M41 430H46V434H41M48 430H53V434H48M39 437.500H55" fill="#fff" stroke="#000"/>
<path d="M67 427H82M67 424H82" stroke="#888" stroke-dasharray="1 1"/><path d="M67.500 437V430H73V433M76 433V430H82M67 438H82" fill="none" stroke="#555"/>
<rect x="11.500" y="453.500" width="15" height="7" fill="#fff" stroke="#bbb"/><path d="M13 455H15V459H13ZM16 455H18V459H16ZM19 455H21V459H19Z" fill="#006"/>
<path d="M41 451V463H54M41 457H54M44 451H54M44 463H54" fill="none" stroke="#000"/><rect x="40" y="450" width="3" height="3" fill="#cc8" stroke="#000"/><rect x="43" y="456" width="3" height="3" fill="#cc8" stroke="#000"/><rect x="46" y="462" width="3" height="3" fill="#cc8" stroke="#000"/>
<g fill="#fff" stroke="#000"><rect x="67.500" y="450.500" width="4" height="4"/><rect x="73.500" y="450.500" width="4" height="4"/><rect x="67.500" y="459.500" width="4" height="4"/><rect x="73.500" y="459.500" width="4" height="4"/></g><circle cx="81" cy="452" r="2" fill="#0aa"/><circle cx="69" cy="458" r="1.500" fill="#0a0"/>
<g fill="#fff" stroke="#000"><rect x="18.500" y="479.500" width="8" height="8"/><rect x="15.500" y="481.500" width="9" height="8"/><rect x="11.500" y="484.500" width="14" height="6.500" stroke-width="1.400"/></g><path d="M15 486L18.500 489L22 486" stroke="#888" fill="none"/>
<path d="M41 480V487M44 483H54M41 490.500H41.800M45 490.500H45.800M49 490.500H49.800M53 490.500H53.800" stroke="#000" fill="none" stroke-width="1.400"/><rect x="40" y="480" width="4" height="7" fill="#eee"/>
<g stroke="#000" fill="#fff"><rect x="67.500" y="477.500" width="14" height="14" stroke-width="1.400"/><path d="M77.500 478V491" /><rect x="77.500" y="478" width="4" height="13" fill="#555"/><path d="M70 481H76M70 484H76M70 487H76M70 490H76" stroke="#247"/></g>
<g stroke="#000" fill="#fff"><rect x="12.500" y="507.500" width="14" height="14" stroke-width="1.400"/></g><path d="M15 510H20V512H15ZM21 510H24V512H21ZM15 514H24V516H15ZM15 518H19V520H15ZM21 518H24V520H21Z"/>
<g stroke="#000" fill="#fff"><rect x="39.500" y="507.500" width="15" height="14" stroke-width="1.400"/><rect x="40" y="508" width="15" height="3" fill="#000"/><rect x="42.500" y="513.500" width="4" height="6"/><rect x="48.500" y="513.500" width="4" height="6"/></g>
<text x="67" y="518" font-size="12" font-weight="bold" fill="#000">##</text><path d="M82.500 508V520" stroke="#000"/>

<!-- form title icon -->
<g transform="translate(125,100)"><path d="M8 3C5 1 2 2 1 4L1 11C3 9 6 10 8 12C10 10 13 9 15 11V4C13 2 10 1 8 3Z" fill="#fff" stroke="#345"/><path d="M8 3V12" stroke="#345"/><path d="M9 4L14 4V10L9 10Z" fill="#8cf"/><path d="M2 4L7 5" stroke="#d22"/><path d="M2 7L7 8" stroke="#ea2"/></g>

<!-- form icons -->
<g transform="translate(138,198)"><circle cx="5" cy="5" r="4.500" fill="#ee0" stroke="#750"/><path d="M7 7L15 15M11 11L9 13M13 13L11 15" stroke="#750" stroke-width="2.600"/><path d="M7 7L15 15" stroke="#ee0" stroke-width="1.200"/><circle cx="4" cy="4" r="1.200" fill="#750"/></g>
<g transform="translate(354,200)"><circle cx="10" cy="6" r="4.500" fill="#cfe8ff" stroke="#68a"/><path d="M6 10L1 15" stroke="#c96" stroke-width="2.400"/></g>
<g transform="translate(561,201)"><rect x=".5" y=".5" width="14" height="12" fill="#bde" stroke="#6ad"/><rect x="1" y="1" width="13" height="2" fill="#6ad"/><path d="M5.500 1V13M10 1V13M1 5.500H14M1 9.500H14" stroke="#6ad"/><circle cx="8" cy="7.500" r="2.500" fill="#fff" stroke="#e90" stroke-width="1.600"/></g>
<path d="M149 226V236L155 231Z" fill="#ef7a50"/><path d="M639 232V240L645 236Z" fill="#ef7a50"/>

<!-- scroll arrows -->
<use href="#arrD" x="1065" y="231"/>
<use href="#arrU" x="1068" y="256"/>
<use href="#arrD" x="1068" y="589"/>
<use href="#arrD" x="1409" y="602"/>
<g fill="#777">
<use href="#arrU" x="1412" y="172"/><use href="#arrD" x="1412" y="536"/>
<path d="M1125 555L1129 552V559ZM1397 552L1401 555.500L1397 559Z"/>
<use href="#arrU" x="1408" y="645"/><use href="#arrD" x="1408" y="781"/>
</g>
<path d="M1244.500 552V559M1247.500 552V559M1250.500 552V559" stroke="#777"/>
<path d="M1407 664H1415M1407 666H1415M1407 668H1415" stroke="#777"/>
<path d="M1411 347H1419M1411 349H1419M1411 351H1419" stroke="#888"/>

<!-- project toolbar icons -->
<g stroke="#000" fill="#fff"><rect x="1124.500" y="144.500" width="13" height="11"/><rect x="1125" y="145" width="13" height="2" fill="#247"/><path d="M1127 149H1135M1127 151H1135M1127 153H1135" stroke="#444"/></g>
<g stroke="#000" fill="#fff"><rect x="1145.500" y="143.500" width="14" height="12"/><rect x="1146" y="144" width="14" height="2" fill="#000"/><path d="M1147 149H1151M1154 149H1158M1147 152H1151M1154 152H1158"/></g>
<path d="M1175.500 146.500L1177 144.500H1183L1184 146.500H1190.500V155.500H1175.500Z" fill="#ddd" stroke="#222"/>

<!-- tree lines -->
<g stroke="#707070" fill="none" stroke-dasharray="1 1">
<path d="M1146.500 180V536"/>
<path d="M1166.500 196V510"/>
<path d="M1127.500 179V184"/>
<path d="M1132 174.500H1140M1151 190.500H1158"/>
<path d="M1167 206.500H1178M1167 222.500H1178M1167 238.500H1178M1167 254.500H1178M1167 270.500H1178M1167 286.500H1178M1167 302.500H1178M1167 318.500H1178M1167 334.500H1178M1167 350.500H1178M1167 366.500H1178M1167 382.500H1178M1167 398.500H1178M1167 414.500H1178M1167 430.500H1178M1167 446.500H1178M1167 462.500H1178M1167 478.500H1178M1167 494.500H1178M1167 510.500H1178"/>
<path d="M1151 526.500H1158M1151 542.500H1158"/>
</g>
<use href="#pm" x="1123" y="170"/><use href="#pm" x="1142" y="186"/><use href="#pp" x="1142" y="522"/><use href="#pp" x="1142" y="538"/>
<g transform="translate(1139,166)"><path d="M1 6L5 4L13 7V13L5 15L1 12Z" fill="#eee" stroke="#000"/><path d="M3 5L8 8M9 11L14 3" stroke="#c22" stroke-width="1.400"/><rect x="5" y="7" width="4" height="3" fill="#2aa"/><path d="M11 1L13 3" stroke="#06c" stroke-width="2"/></g>
<use href="#fld" x="1159" y="183"/><use href="#fld" x="1159" y="519"/><use href="#fld" x="1159" y="535"/>
<use href="#frm" x="1178" y="200"/><use href="#frm" x="1178" y="216"/><use href="#frm" x="1178" y="232"/><use href="#frm" x="1178" y="248"/><use href="#frm" x="1178" y="264"/><use href="#frm" x="1178" y="280"/><use href="#frm" x="1178" y="296"/><use href="#frm" x="1178" y="312"/><use href="#frm" x="1178" y="328"/><use href="#frm" x="1178" y="344"/><use href="#frm" x="1178" y="360"/><use href="#frm" x="1178" y="376"/><use href="#frm" x="1178" y="392"/><use href="#frm" x="1178" y="408"/><use href="#frm" x="1178" y="424"/><use href="#frm" x="1178" y="440"/><use href="#frm" x="1178" y="456"/><use href="#frm" x="1178" y="472"/><use href="#frm" x="1178" y="488"/><use href="#frm" x="1178" y="504"/>

<!-- button icons -->
<g transform="translate(761,666)"><rect width="14" height="14" fill="#4a4fc0"/><rect x="3" y="1" width="8" height="6" fill="#d8d8f0"/><rect x="4" y="9" width="7" height="5" fill="#333"/><rect x="8" y="10" width="2" height="3" fill="#ddd"/></g>
<g transform="translate(844,665)"><path d="M1 10C4 8 8 7 10 8L13 11C10 14 6 16 3 15Z" fill="#d8c878" stroke="#886"/><path d="M10 8L15 2L17 4L12 10" fill="#445" stroke="#223"/><path d="M3 14L8 10" stroke="#a90"/></g>
<g transform="translate(928,666)" fill="none" stroke="#3a70d8" stroke-width="2.800"><path d="M3 4H8C14 4 14 12 7 13"/><path d="M6 0.500L2 4.300L6 8" stroke-width="2"/></g>
<g transform="translate(1013,667)"><circle cx="7" cy="7" r="7" fill="#e03a10"/><path d="M4.500 4.500L9.500 9.500M9.500 4.500L4.500 9.500" stroke="#fff" stroke-width="2.400"/></g>

<!-- ruler ticks & status -->
<path d="M48 757H53M50 764H53M48 770H53M50 776H53M48 787H53M48 793H53M50 799H53M48 805H53M50 811H53M48 817H53" stroke="#666" fill="none"/>
<circle cx="97" cy="830" r="4.500" fill="#888"/><path d="M97 827V831H100" stroke="#333" fill="none"/>
<path d="M284 826L291 831L284 836Z" fill="#ccc"/>
</svg>
</body></html>
